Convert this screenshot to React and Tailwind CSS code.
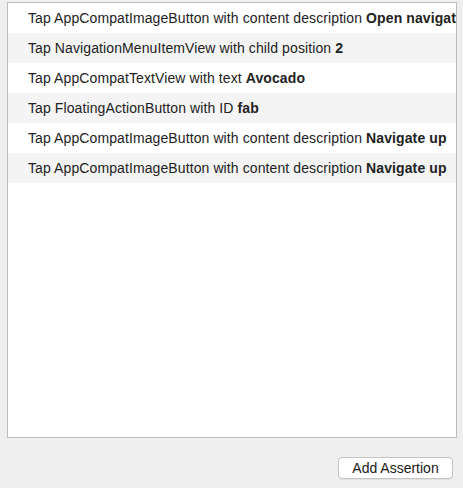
import React from 'react';

const steps = [
  { text: 'Tap AppCompatImageButton with content description', bold: 'Open navigation drawer' },
  { text: 'Tap NavigationMenuItemView with child position', bold: '2' },
  { text: 'Tap AppCompatTextView with text', bold: 'Avocado' },
  { text: 'Tap FloatingActionButton with ID', bold: 'fab' },
  { text: 'Tap AppCompatImageButton with content description', bold: 'Navigate up' },
  { text: 'Tap AppCompatImageButton with content description', bold: 'Navigate up' },
];

const App = () => {
  return (
    <div
      className="w-[463px] h-[488px] bg-[#efefef] flex flex-col text-[14px] text-[#222]"
      style={{ fontFamily: '"Liberation Sans", Arial, sans-serif' }}
    >
      {/* Recorded steps list */}
      <div className="ml-[7px] mt-[2px] w-[450px] h-[436px] bg-white border border-[#bdbdbd] overflow-hidden">
        {steps.map((step, idx) => (
          <div
            key={idx}
            className={`h-[30px] leading-[30px] pl-[20px] whitespace-nowrap overflow-hidden tracking-[0.1px] ${idx % 2 === 1 ? 'bg-[#f4f4f4]' : 'bg-white'}`}
          >
            <span>{step.text} </span>
            <span className="font-bold">{step.bold}</span>
          </div>
        ))}
      </div>

      {/* Footer */}
      <div className="flex justify-end pr-[10px] pt-[19px]">
        <button className="w-[115px] h-[22px] bg-white border border-[#c4c4c4] rounded-[4px] text-[14px] text-[#1a1a1a] leading-none shadow-[0_1px_0_rgba(0,0,0,0.05)]">
          Add Assertion
        </button>
      </div>
    </div>
  );
};

export default App;
